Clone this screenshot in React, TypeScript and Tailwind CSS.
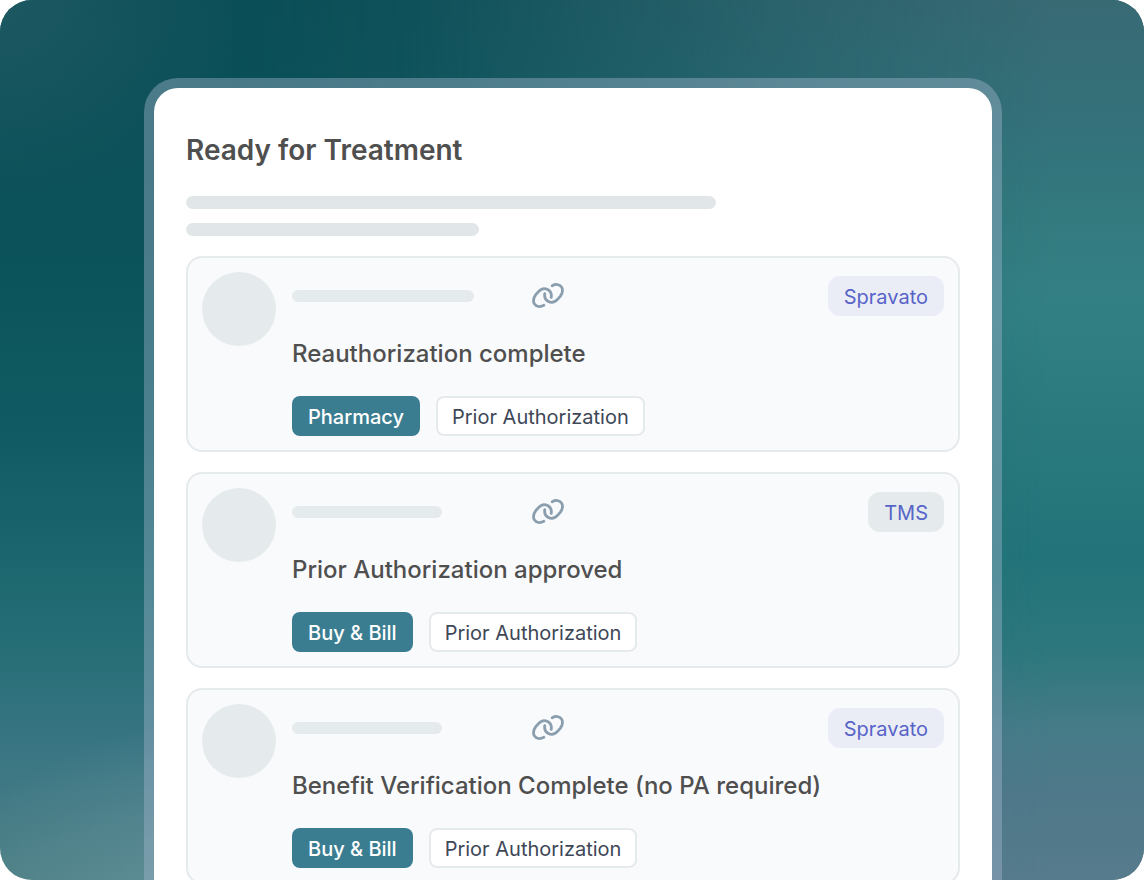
import type { JSX } from "react";
import clsx from "clsx";

type Item = {
  title: string;
  channel: string;
  treatment: string;
  treatmentClass: string;
  nameClass: string;
};

const items: Item[] = [
  {
    title: "Reauthorization complete",
    channel: "Pharmacy",
    treatment: "Spravato",
    treatmentClass: "bg-[#ebedf6]",
    nameClass: "w-[182px]",
  },
  {
    title: "Prior Authorization approved",
    channel: "Buy & Bill",
    treatment: "TMS",
    treatmentClass: "bg-[#e5ebed]",
    nameClass: "w-[150px]",
  },
  {
    title: "Benefit Verification Complete (no PA required)",
    channel: "Buy & Bill",
    treatment: "Spravato",
    treatmentClass: "bg-[#ebedf6]",
    nameClass: "w-[150px]",
  },
];

function LinkIcon(): JSX.Element {
  return (
    <svg
      className="h-8 w-8 shrink-0"
      viewBox="0 0 32 32"
      fill="none"
      stroke="#8a9eae"
      strokeWidth="2.8"
      strokeLinecap="round"
      aria-hidden="true"
    >
      <path d="M11.8 25.3C8.2 27.3 4.4 26.8 2.5 24C0.6 20.9 1.6 17.6 3.8 14.7L6 12.1C8.6 9.2 12.4 7.9 15.6 9.5C18.7 11.1 19.7 14.4 19.2 17.4" />
      <path d="M20.2 5.7C23.8 3.7 27.6 4.2 29.5 7C31.4 10.1 30.4 13.4 28.2 16.3L26 18.9C23.4 21.8 19.6 23.1 16.4 21.5C13.3 19.9 12.3 16.6 12.8 13.6" />
    </svg>
  );
}

function TreatmentCard({ item }: { item: Item }): JSX.Element {
  return (
    <li className="flex gap-4 rounded-2xl border-2 border-[#e5eaed] bg-[#f9fafc] p-3.5">
      <div className="h-[74px] w-[74px] shrink-0 rounded-full bg-[#e5ebed]" />
      <div className="min-w-0 flex-1">
        <div className="flex h-12 items-center">
          <div className="w-60">
            <div
              className={clsx("h-3 rounded-full bg-[#e5ebed]", item.nameClass)}
            />
          </div>
          <LinkIcon />
          <span
            className={clsx(
              "ml-auto flex h-10 items-center rounded-xl px-4 pt-0.5 text-xl text-[#5764c8]",
              item.treatmentClass,
            )}
          >
            {item.treatment}
          </span>
        </div>
        <h2 className="mt-4 text-2xl leading-9 font-medium text-[#4f4f4f]">
          {item.title}
        </h2>
        <div className="mt-6 flex gap-4 text-xl">
          <span className="flex h-10 items-center rounded-lg bg-[#3a7d91] px-4 pt-0.5 font-medium text-white">
            {item.channel}
          </span>
          <span className="flex h-10 items-center rounded-lg border-2 border-[#e5eaed] bg-white px-3.5 pt-0.5 text-[#3e4757]">
            Prior Authorization
          </span>
        </div>
      </div>
    </li>
  );
}

// The right-hand colours fade in over the left-hand ones
function Backdrop(): JSX.Element {
  return (
    <div className="absolute inset-0 -z-10 bg-[radial-gradient(ellipse_22%_24%_at_0%_0%,#1d5861,transparent),radial-gradient(ellipse_26%_22%_at_20%_104%,#62909a,transparent),linear-gradient(to_bottom,#0a4e57_0%,#0b525a_26%,#0f5a62_47%,#1b666e_63%,#286f78_75%,#3b7684_86%,#4c7f84_100%)]">
      <div className="h-full bg-[linear-gradient(to_bottom,#386a74_0%,#34717a_14%,#33797e_23%,#338084_34%,#2a7a7e_48%,#22747a_63%,#2d777d_74%,#467b88_83%,#4e7889_90%,#567b8c_100%)] [mask-image:linear-gradient(to_right,transparent_20%,rgb(0_0_0/0.1)_35%,rgb(0_0_0/0.75)_70%,black_92%)]" />
    </div>
  );
}

export default function App(): JSX.Element {
  return (
    <div className="h-screen bg-white font-['Inter',sans-serif]">
      <main className="relative isolate h-full overflow-hidden rounded-[32px] pt-[78px] pr-[142px] pl-36">
        <Backdrop />
        <div className="rounded-t-[34px] bg-[#a7b9cf]/40 px-2.5 pt-2.5">
          <section className="rounded-t-3xl bg-white px-8 pt-11">
            <h1 className="text-[28px] leading-9 font-semibold text-[#4f4f4f]">
              Ready for Treatment
            </h1>
            <div className="mt-7 h-[13px] w-[530px] rounded-full bg-[#e1e6e9]" />
            <div className="mt-3.5 h-[13px] w-[293px] rounded-full bg-[#e1e6e9]" />
            <ul className="mt-5 flex flex-col gap-5">
              {items.map((item, index) => (
                <TreatmentCard key={index} item={item} />
              ))}
            </ul>
          </section>
        </div>
      </main>
    </div>
  );
}
